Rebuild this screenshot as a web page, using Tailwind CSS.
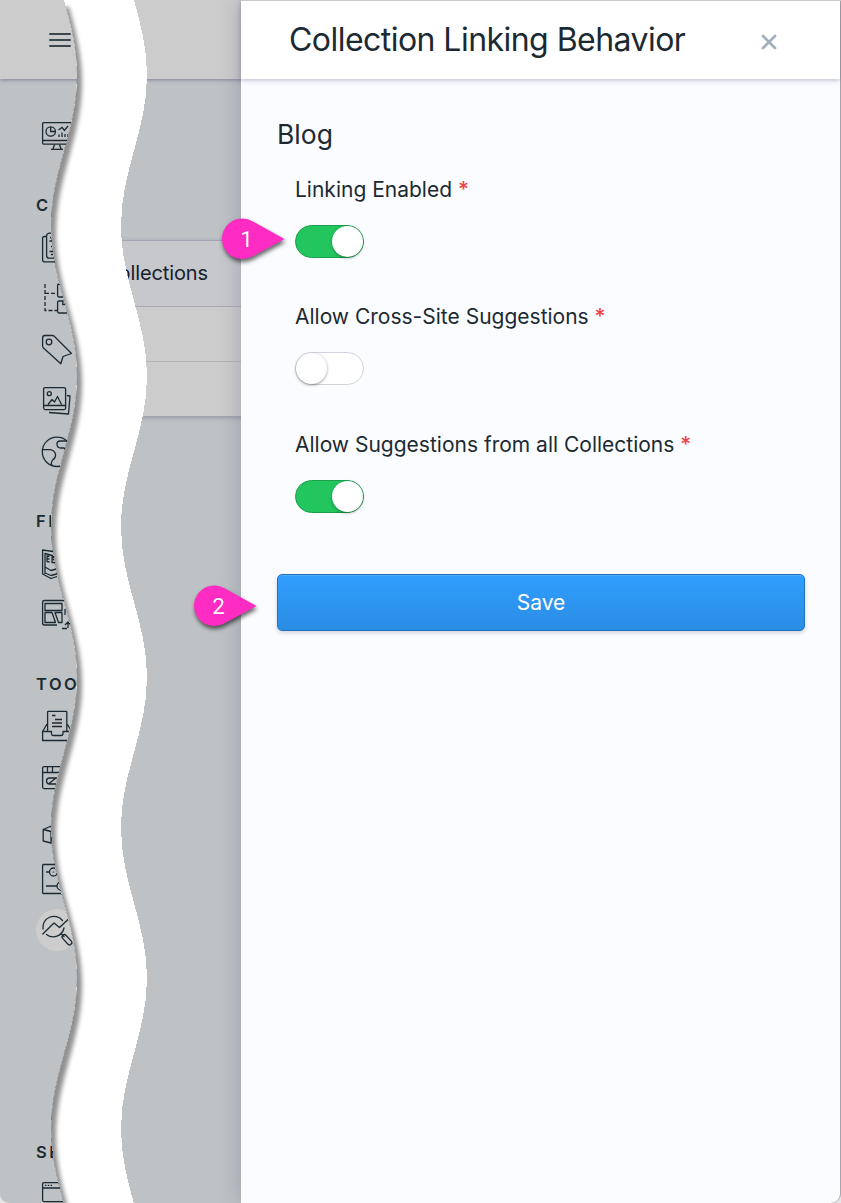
<!DOCTYPE html>
<html lang="en">
<head>
<meta charset="utf-8">
<title>Collection Linking Behavior</title>
<script src="https://cdn.jsdelivr.net/npm/@tailwindcss/browser@4"></script>
</head>
<body class="bg-[#e6e6e6] font-['Inter',sans-serif] text-[#1b2a32]">
<div class="relative w-[841px] h-[1203px] overflow-hidden rounded-b-[9px] bg-[#bec2c5]">
  <div class="flex h-full flex-col">
    <header class="relative flex h-[79px] shrink-0 items-center bg-[#ccc] pl-[49px] pt-[1px] shadow-[0_1px_4px_rgba(60,55,100,0.45)]">
      <svg class="h-4 w-[22px]" viewBox="0 0 22 16" stroke="#3c484d" stroke-width="2" stroke-linecap="round"><path d="M1 2H21M1 8H21M1 14H21"/></svg>
    </header>
    <div class="flex min-h-0 flex-1">
      <nav class="flex w-[110px] flex-col pt-[32px] pl-10 [&_svg]:block [&_svg]:h-[51px] [&_svg]:w-[38px] [&_svg]:shrink-0 [&_svg]:fill-none [&_svg]:stroke-[#1b2a32] [&_svg]:stroke-[1.3] [&_h2]:-ml-1 [&_h2]:flex [&_h2]:h-[61px] [&_h2]:shrink-0 [&_h2]:items-end [&_h2]:pb-[9px] [&_h2]:text-[16.5px] [&_h2]:leading-[18px] [&_h2]:font-semibold [&_h2]:tracking-[2.5px]">
        <svg viewBox="40 111 38 51"><rect x="42.600" y="122.600" width="32" height="21.500" rx="1"/><path d="M42.600 140.500H74M54.500 144.500L53 149M59.500 144.500L61 149M51 149.300H63"/><circle cx="50.700" cy="131.500" r="4.700"/><path d="M50.700 127V131.500H55.300M58.500 130L62 127.500L64.500 130.500L68 126M59 134.500V137M62 132.500V137M65 134V137M68 134V137"/></svg>
        <h2>C</h2>
        <svg viewBox="40 223.500 38 51"><path d="M46.500 237H44.500Q42.600 237 42.600 239V260.500Q42.600 262.300 44.500 262.300H64"/><path d="M46.600 256V236.500Q46.600 233.600 50 233.600H66M46.600 256Q46.600 258.700 49 258.700H66M50 238H60M49.500 241.500H60M51 247H60M49.500 252H60M51 255H60"/></svg>
        <svg viewBox="40 274 38 51"><path stroke-dasharray="4 2" d="M45 284V310.500H57M45 293.400H57"/><rect x="57.600" y="284" width="14" height="13" rx="1.500"/><path d="M63.500 301H59Q57.600 301 57.600 302.500V311.500Q57.600 313 59 313H70M62.800 301V304.500H66"/></svg>
        <svg viewBox="40 325 38 51"><path stroke-linejoin="round" d="M42.600 338V346Q42.600 347 43.500 348L60.800 363.800L63 356.500L71.500 353.500L55 337Q54 335.500 52.500 335.500H45Q42.600 335.500 42.600 338Z"/><circle cx="49" cy="342" r="2.800"/></svg>
        <svg viewBox="40 376 38 51"><rect x="43.600" y="387.600" width="22" height="22" rx="1.500"/><path stroke-linejoin="round" d="M44 405.500H65M48 404.500L52 399.500L54.500 402L57.500 396.500L61.500 404.500M67 395.500L70 396L68.500 414L49 412.500"/><circle cx="49.300" cy="393.700" r="2"/></svg>
        <svg viewBox="40 427 38 51"><circle cx="57" cy="451.800" r="14.700"/><path d="M42.500 449.700H50Q54 450 55.500 454Q56 458 52.500 460Q50.500 463 52 465.500M68 441H60Q57 441 57 444Q57 448 61 448H64Q65 450 68 450"/></svg>
        <h2>FI</h2>
        <svg viewBox="40 539 38 51"><path stroke-linejoin="round" d="M53 551.500L42.600 550V574L51 578.500L60 575.500M45 574V553.500L54 556M45 567L51 570.500L60 568M45 573L51 575.500L60 573M49.500 556.500L47 556V561.500L49.500 562M47 559H49.500M55 557.500L52 557V562.500H55M52 559.500H54"/></svg>
        <svg viewBox="40 590 38 51"><path stroke-linejoin="round" d="M66 600.500H44.500Q42.600 600.500 42.600 602V623Q42.600 625 44.500 625H57M45 603.500H62V610.500H45ZM45 612.500H52L55.500 622.500H45ZM55 612.500H62V622.500H58.500ZM65 609V615M68 628V623M65 625L68 622L71 625M62 628.500H67"/></svg>
        <h2>TOO</h2>
        <svg viewBox="40 702 38 51"><path stroke-linejoin="round" d="M47.600 731V712Q47.600 711.400 48.500 711.400H66Q66.800 711.400 66.800 712V731M52 715.500H55.500M55 719.500H62M52 723H62M52 726.500H62M47 724L42.600 731.500V740.500H72V731.500L67 724M42.600 731.500H51.500V734Q51.500 735.500 53 735.500H61Q63 735.500 63 733.500V731.500H72"/></svg>
        <svg viewBox="40 753 38 51"><rect x="42.600" y="766.600" width="30" height="22" rx="1.500"/><path d="M42.600 772.500H70M47.500 767V772M52.500 767V772"/><path d="M56 778L49 783.500M60 784H49.500Q46.500 784 46.500 781Q46.500 778 49.500 778H60"/></svg>
        <svg viewBox="40 804 38 51"><path stroke-linejoin="round" d="M56 827L50 826.500L43.200 829.500V841L51 843V831.500L43.200 829.500M51 831.500L57 828.500"/></svg>
        <svg viewBox="40 855 38 51"><path d="M64 864.500H43.500Q42.600 864.500 42.600 865.500V892.500Q42.600 893.500 43.500 893.500H66M46 872H49.500M46 886H57"/><circle cx="53.500" cy="872" r="4"/><circle cx="53.500" cy="872" r=".2"/><circle cx="61" cy="886" r="4"/></svg>
        <svg class="-ml-1 !w-[42px]" viewBox="36 906 42 51"><circle cx="57" cy="930" r="21" fill="#cdcdcd" stroke="none"/><path stroke-linejoin="round" stroke-linecap="round" d="M62.500 920.500A11 11 0 0 0 43 929M46.500 934.500A11 11 0 0 0 64 928M42.800 934L54 923L59.500 927.500L68 919.500M61.500 934L64 936.500"/><rect x="61" y="937.500" width="12" height="4.500" rx="2" transform="rotate(47 67 939.700)"/></svg>
        <h2 class="mt-[152px]">SE</h2>
        <svg viewBox="40 1170 38 51"><rect x="42.600" y="1182.600" width="30" height="19" rx="1.500"/><path d="M42.600 1188H70M45 1185.300H46.500M47.800 1185.300H49.300M50.600 1185.300H52.100"/></svg>
      </nav>
      <section class="mt-[161px] h-[177px] w-[140px] border-y border-[#a4a5b3] bg-[#ccc] shadow-[0_1px_4px_rgba(60,60,100,0.3)]">
        <div class="flex h-[66px] items-center border-b border-[#a9aab4] bg-[#c7c8cb] pb-[2px] text-[20px] tracking-[-0.1px] text-[#14202b]"><span class="-ml-[6px]">Collections</span></div>
        <div class="h-[55px] border-b border-[#b3b4b9]"></div>
        <div class="h-[54px]"></div>
      </section>
    </div>
  </div>

  <svg class="absolute inset-0" width="241" height="1203" viewBox="0 0 241 1203">
    <defs>
      <clipPath id="tear"><path id="wave" d="M64 0c6.700 24.500 13 48 13 75.250c0 27.250-6.300 50.750-13 75.250c-6.700 24.500-13 48-13 75.250c0 27.250 6.300 50.750 13 75.250c6.700 24.500 13 48 13 75.250c0 27.250-6.300 50.750-13 75.250c-6.700 24.500-13 48-13 75.250c0 27.250 6.300 50.750 13 75.250c6.700 24.500 13 48 13 75.250c0 27.250-6.300 50.750-13 75.250c-6.700 24.500-13 48-13 75.250c0 27.250 6.300 50.750 13 75.250c6.700 24.500 13 48 13 75.250c0 27.250-6.300 50.750-13 75.250c-6.700 24.500-13 48-13 75.250c0 27.250 6.300 50.750 13 75.250h70c-6.700-24.500-13-48-13-75.250c0-27.250 6.300-50.750 13-75.250c6.700-24.500 13-48 13-75.250c0-27.250-6.300-50.750-13-75.250c-6.700-24.500-13-48-13-75.250c0-27.250 6.300-50.750 13-75.250c6.700-24.500 13-48 13-75.250c0-27.250-6.300-50.750-13-75.250c-6.700-24.500-13-48-13-75.250c0-27.250 6.300-50.750 13-75.250c6.700-24.500 13-48 13-75.250c0-27.250-6.300-50.750-13-75.250c-6.700-24.500-13-48-13-75.250c0-27.250 6.300-50.750 13-75.250c6.700-24.500 13-48 13-75.250c0-27.250-6.300-50.750-13-75.250z"/></clipPath>
      <filter id="soft" x="-20%" y="-5%" width="140%" height="110%"><feGaussianBlur stdDeviation="2.200"/></filter>
    </defs>
    <use href="#wave" fill="#fff" shape-rendering="crispEdges"/>
    <g clip-path="url(#tear)"><path filter="url(#soft)" transform="translate(5 7)" fill="#000" fill-opacity=".43" d="M0 0H64c6.700 24.500 13 48 13 75.250c0 27.250-6.300 50.750-13 75.250c-6.700 24.500-13 48-13 75.250c0 27.250 6.300 50.750 13 75.250c6.700 24.500 13 48 13 75.250c0 27.250-6.300 50.750-13 75.250c-6.700 24.500-13 48-13 75.250c0 27.250 6.300 50.750 13 75.250c6.700 24.500 13 48 13 75.250c0 27.250-6.300 50.750-13 75.250c-6.700 24.500-13 48-13 75.250c0 27.250 6.300 50.750 13 75.250c6.700 24.500 13 48 13 75.250c0 27.250-6.300 50.750-13 75.250c-6.700 24.500-13 48-13 75.250c0 27.250 6.300 50.750 13 75.250V1215H0z"/></g>
  </svg>

  <aside class="absolute top-px right-px bottom-0 left-[241px] flex flex-col rounded-br-[9px] bg-[#fbfcff] shadow-[0_0_22px_rgba(70,70,105,0.3),1px_0_0_#b5b5b8]">
    <div class="flex h-[78px] shrink-0 items-center justify-between bg-white pr-[63px] pl-12 shadow-[0_1px_5px_rgba(60,55,110,0.35)]">
      <h1 class="text-[32px] leading-10 tracking-[-0.54px]">Collection Linking Behavior</h1>
      <svg class="mt-1 h-4 w-4" viewBox="0 0 16 16" stroke="#a3afba" stroke-width="2.800" stroke-linecap="round"><path d="M2 2L14 14M14 2L2 14"/></svg>
    </div>
    <form class="flex flex-col pr-[35px] pl-9 pt-[39px]">
      <h2 class="text-[26.5px] leading-8">Blog</h2>
      <div class="flex flex-col pl-[18px] text-[21px]">
        <div class="h-[127px] pt-[25px]"><p class="leading-[30px]">Linking Enabled <span class="font-medium text-[#ef4444]">*</span></p>
          <div class="mt-5 flex h-[33px] w-[69px] items-center justify-end rounded-full border border-[#1b9f4b] bg-[#22c55e]"><i class="block size-[31px] rounded-full bg-white shadow-[0_1px_3px_rgba(0,0,0,0.35)]"></i></div></div>
        <div class="h-[128px] pt-[25px]"><p class="leading-[30px]">Allow Cross-Site Suggestions <span class="font-medium text-[#ef4444]">*</span></p>
          <div class="mt-5 flex h-[33px] w-[69px] items-center rounded-full border border-[#d1d3dc] bg-white"><i class="block size-[31px] rounded-full bg-white shadow-[0_1px_3px_rgba(0,0,0,0.4)]"></i></div></div>
        <div class="h-[129px] pt-[25px]"><p class="leading-[30px]">Allow Suggestions from all Collections <span class="font-medium text-[#ef4444]">*</span></p>
          <div class="mt-5 flex h-[33px] w-[69px] items-center justify-end rounded-full border border-[#1b9f4b] bg-[#22c55e]"><i class="block size-[31px] rounded-full bg-white shadow-[0_1px_3px_rgba(0,0,0,0.35)]"></i></div></div>
      </div>
      <button type="button" class="mt-[40px] h-[57px] rounded-[5px] border border-[#2173bd] bg-linear-to-b from-[#319eff] to-[#2a8de4] text-[21px] text-white shadow-[0_2px_4px_rgba(50,50,93,0.2),inset_0_1px_0_#50aaf8]">Save</button>
    </form>
  </aside>
  <div class="absolute top-0 right-0 left-[241px] h-px bg-[#c9c9cb]"></div>

  <svg class="absolute top-[214px] left-[215px] drop-shadow-[1px_3px_2px_rgba(0,0,0,0.6)]" width="70" height="50" viewBox="0 0 70 50"><path fill="#ff2cc4" d="M69.500 25L38 7.500A20.300 20.300 0 1 0 38 42Z"/><text x="31.500" y="33" text-anchor="middle" fill="#fff" font-family="Roboto, sans-serif" font-size="22.500">1</text></svg>
  <svg class="absolute top-[581px] left-[187px] drop-shadow-[1px_3px_2px_rgba(0,0,0,0.6)]" width="70" height="50" viewBox="0 0 70 50"><path fill="#ff2cc4" d="M69.500 25L38 7.500A20.300 20.300 0 1 0 38 42Z"/><text x="31.500" y="33" text-anchor="middle" fill="#fff" font-family="Roboto, sans-serif" font-size="22.500">2</text></svg>
</div>
</body>
</html>
